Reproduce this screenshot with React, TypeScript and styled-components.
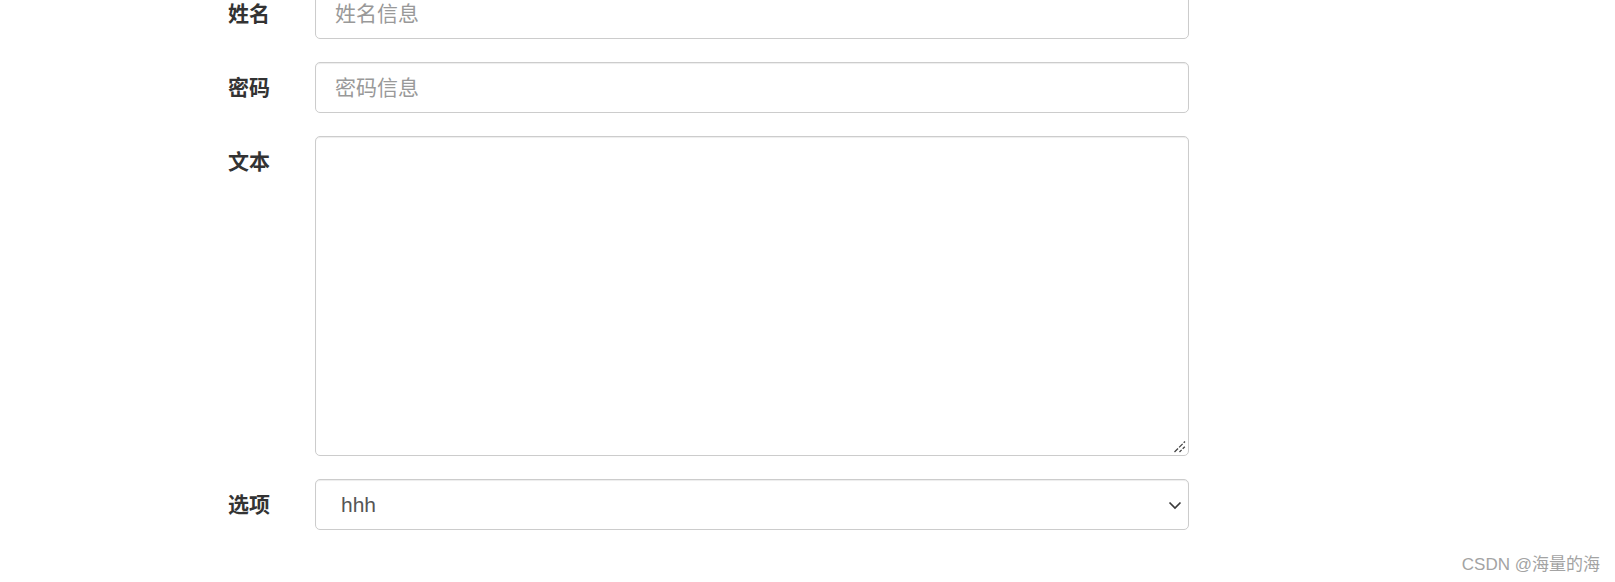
import React from "react";
import styled, { createGlobalStyle } from "styled-components";

const Global = createGlobalStyle`
  html, body {
    margin: 0;
    padding: 0;
    background: #ffffff;
    overflow: hidden;
  }
  body {
    font-family: "Liberation Sans", Arial, "Noto Sans CJK SC", sans-serif;
    color: #333;
  }
`;

const Page = styled.div`
  position: relative;
  width: 1615px;
  height: 582px;
  overflow: hidden;
`;

const Form = styled.form`
  display: grid;
  grid-template-columns: 87px 874px;
  row-gap: 23px;
  margin-top: -12px;
  padding-left: 228px;
`;

const Label = styled.label`
  font-size: 21px;
  font-weight: 700;
  line-height: 51px;
  color: #333;
  font-family: "Liberation Sans", Arial, "Noto Sans CJK SC", sans-serif;
`;

const Field = styled.div`
  position: relative;
  width: 874px;
`;

const fieldBase = `
  box-sizing: border-box;
  width: 874px;
  border: 1px solid #ccc;
  border-radius: 5px;
  background: #fff;
  font-size: 21px;
  font-family: "Liberation Sans", Arial, "Noto Sans CJK SC", sans-serif;
  color: #555;
  box-shadow: inset 0 1px 1px rgba(0, 0, 0, 0.075);
  outline: none;
  margin: 0;
  display: block;
`;

const Input = styled.input`
  ${fieldBase}
  height: 51px;
  padding: 0 19px;
  &::placeholder {
    color: #999;
  }
`;

const TextArea = styled.textarea`
  ${fieldBase}
  height: 320px;
  padding: 10px 19px;
  resize: none;
`;

const Select = styled.select`
  ${fieldBase}
  appearance: none;
  -webkit-appearance: none;
  height: 51px;
  padding: 0 40px 0 25px;
`;

const Chevron = styled.svg`
  position: absolute;
  right: 7px;
  top: 50%;
  margin-top: -4px;
  width: 14px;
  height: 9px;
  pointer-events: none;
`;

const Grip = styled.svg`
  position: absolute;
  right: 3px;
  bottom: 3px;
  width: 13px;
  height: 13px;
  pointer-events: none;
`;

const Watermark = styled.div`
  position: absolute;
  right: 15px;
  bottom: 7px;
  font-size: 17px;
  color: #a3a3a3;
  font-family: "Liberation Sans", Arial, "Noto Sans CJK SC", sans-serif;
`;

export default function App() {
  return (
    <Page>
      <Global />
      <Form onSubmit={(e) => e.preventDefault()}>
        <Label htmlFor="name">姓名</Label>
        <Field>
          <Input id="name" type="text" placeholder="姓名信息" />
        </Field>
        <Label htmlFor="pwd">密码</Label>
        <Field>
          <Input id="pwd" type="password" placeholder="密码信息" />
        </Field>
        <Label htmlFor="txt">文本</Label>
        <Field>
          <TextArea id="txt" />
          <Grip viewBox="0 0 13 13">
            <path d="M1.5 12 L12 1.5" stroke="#444" strokeWidth="1.3" strokeDasharray="5 1.5" fill="none" />
            <path d="M6.5 12 L12 6.5" stroke="#444" strokeWidth="1.3" strokeDasharray="3 1.5" fill="none" />
          </Grip>
        </Field>
        <Label htmlFor="opt">选项</Label>
        <Field>
          <Select id="opt" defaultValue="hhh">
            <option value="hhh">hhh</option>
          </Select>
          <Chevron viewBox="0 0 14 9">
            <path d="M1.5 1.5 L7 7 L12.5 1.5" stroke="#3a3a3a" strokeWidth="1.7" fill="none" />
          </Chevron>
        </Field>
      </Form>
      <Watermark>CSDN @海量的海</Watermark>
    </Page>
  );
}
